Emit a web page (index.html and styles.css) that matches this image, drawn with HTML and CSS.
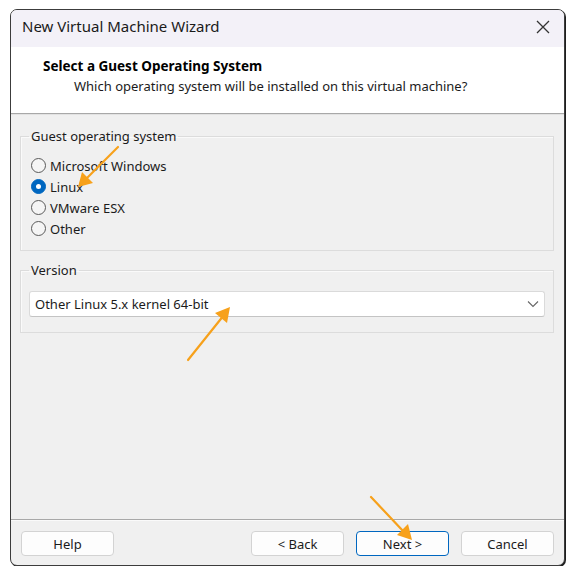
FILE: index.html
```html
<!DOCTYPE html>
<html>
<head>
<meta charset="utf-8">
<link rel="stylesheet" href="styles.css">
</head>
<body>
<div class="window">
  <div class="titlebar">
    <span class="title">New Virtual Machine Wizard</span>
    <svg class="close" width="14" height="14" viewBox="0 0 14 14"><path d="M1 1L13 13M13 1L1 13" stroke="#333" stroke-width="1.3" fill="none"/></svg>
  </div>
  <div class="header">
    <div class="heading">Select a Guest Operating System</div>
    <div class="subheading">Which operating system will be installed on this virtual machine?</div>
  </div>
  <div class="content">
    <fieldset class="group group-os">
      <legend>Guest operating system</legend>
      <div class="radio-list">
        <div class="radio-row"><span class="radio"></span><span>Microsoft Windows</span></div>
        <div class="radio-row"><span class="radio checked"></span><span>Linux</span></div>
        <div class="radio-row"><span class="radio"></span><span>VMware ESX</span></div>
        <div class="radio-row"><span class="radio"></span><span>Other</span></div>
      </div>
    </fieldset>
    <fieldset class="group group-version">
      <legend>Version</legend>
      <div class="select">
        <span>Other Linux 5.x kernel 64-bit</span>
        <svg width="12" height="8" viewBox="0 0 12 8"><path d="M1 1.5L6 6.5L11 1.5" stroke="#666" stroke-width="1.1" fill="none"/></svg>
      </div>
    </fieldset>
  </div>
  <div class="footer">
    <button class="btn">Help</button>
    <div class="spacer"></div>
    <button class="btn">&lt; Back</button>
    <button class="btn default">Next &gt;</button>
    <button class="btn">Cancel</button>
  </div>
</div>
<svg class="annotations" width="570" height="570" viewBox="0 0 570 570">
  <g stroke="#f7a11b" stroke-width="2.2" fill="#f7a11b" stroke-linecap="round">
    <line x1="118" y1="147" x2="86" y2="179"/>
    <polygon points="78,187 82,172 93,183" stroke="none"/>
    <line x1="188" y1="360" x2="224" y2="315"/>
    <polygon points="230,307 227,323 215,313" stroke="none"/>
    <line x1="371" y1="497" x2="404" y2="532"/>
    <polygon points="412,540 397,535 408,524" stroke="none"/>
  </g>
</svg>
</body>
</html>
```
FILE: styles.css
```css
html, body {
  margin: 0;
  padding: 0;
  background: #ffffff;
  font-family: "Noto Sans", "Open Sans", sans-serif;
  font-size: 13px;
  color: #1b1b1b;
}

.window {
  position: relative;
  margin: 9px 0 0 10px;
  width: 553px;
  height: 555px;
  border: 1px solid #3c3c3c;
  border-radius: 7px;
  box-shadow: 1px 1px 0 #1e1e1e;
  background: #f0f0f0;
  display: flex;
  flex-direction: column;
  overflow: hidden;
}

.titlebar {
  height: 37px;
  flex: none;
  background: #f3f1f8;
  display: flex;
  align-items: center;
  justify-content: space-between;
  padding: 0 14px 5px 11px;
  box-sizing: border-box;
}

.title {
  font-size: 15px;
  color: #1a1a1a;
}

.close {
  margin-top: 2px;
}

.header {
  height: 67px;
  flex: none;
  background: #ffffff;
  border-bottom: 1px solid #a8a8a8;
  box-shadow: 0 1px 0 #e2e2e2;
  padding: 9px 0 0 32px;
  box-sizing: border-box;
}

.heading {
  font-weight: bold;
  font-size: 13.5px;
  color: #000;
  line-height: 20px;
}

.subheading {
  padding-left: 31px;
  line-height: 21px;
}

.content {
  flex: 1;
  padding: 13px 10px 0 9px;
}

.group {
  margin: 0;
  border: 1px solid #dcdcdc;
  box-shadow: inset 1px 1px 0 #fafafa;
  padding: 0 10px;
  box-sizing: border-box;
}

.group legend {
  padding: 0 2px;
  margin-left: -2px;
  line-height: 18px;
}

.group-os {
  height: 124px;
}

.radio-list {
  padding-top: 10px;
}

.radio-row {
  display: flex;
  align-items: center;
  gap: 4px;
  height: 21px;
}

.radio {
  width: 13px;
  height: 13px;
  border: 1px solid #5a5a5a;
  border-radius: 50%;
  background: #f5f5f5;
  box-sizing: content-box;
  position: relative;
}

.radio.checked {
  background: #0067c0;
  border-color: #0067c0;
}

.radio.checked::after {
  content: "";
  position: absolute;
  left: 4px;
  top: 4px;
  width: 5px;
  height: 5px;
  border-radius: 50%;
  background: #fff;
}

.group-version {
  margin-top: 10px;
  height: 72px;
}

.select {
  margin: 12px -2px 0 -2px;
  height: 26px;
  box-sizing: border-box;
  background: #ffffff;
  border: 1px solid #dadada;
  border-bottom-color: #c4c4c4;
  border-radius: 3px;
  display: flex;
  align-items: center;
  justify-content: space-between;
  padding: 0 5px 0 5px;
}

.footer {
  flex: none;
  height: 46px;
  border-top: 1px solid #a8a8a8;
  box-shadow: inset 0 1px 0 #fafafa;
  display: flex;
  align-items: flex-start;
  padding: 11px 10px 0 10px;
  gap: 12px;
  box-sizing: border-box;
}

.spacer {
  flex: 1;
}

.btn {
  width: 93px;
  height: 25px;
  font-family: inherit;
  font-size: 13px;
  color: #1b1b1b;
  background: #fdfdfd;
  border: 1px solid #d3d3d3;
  border-radius: 4px;
  padding: 0;
}

.btn.default {
  border-color: #0067c0;
}

.annotations {
  position: absolute;
  left: 0;
  top: 0;
  pointer-events: none;
}
```
